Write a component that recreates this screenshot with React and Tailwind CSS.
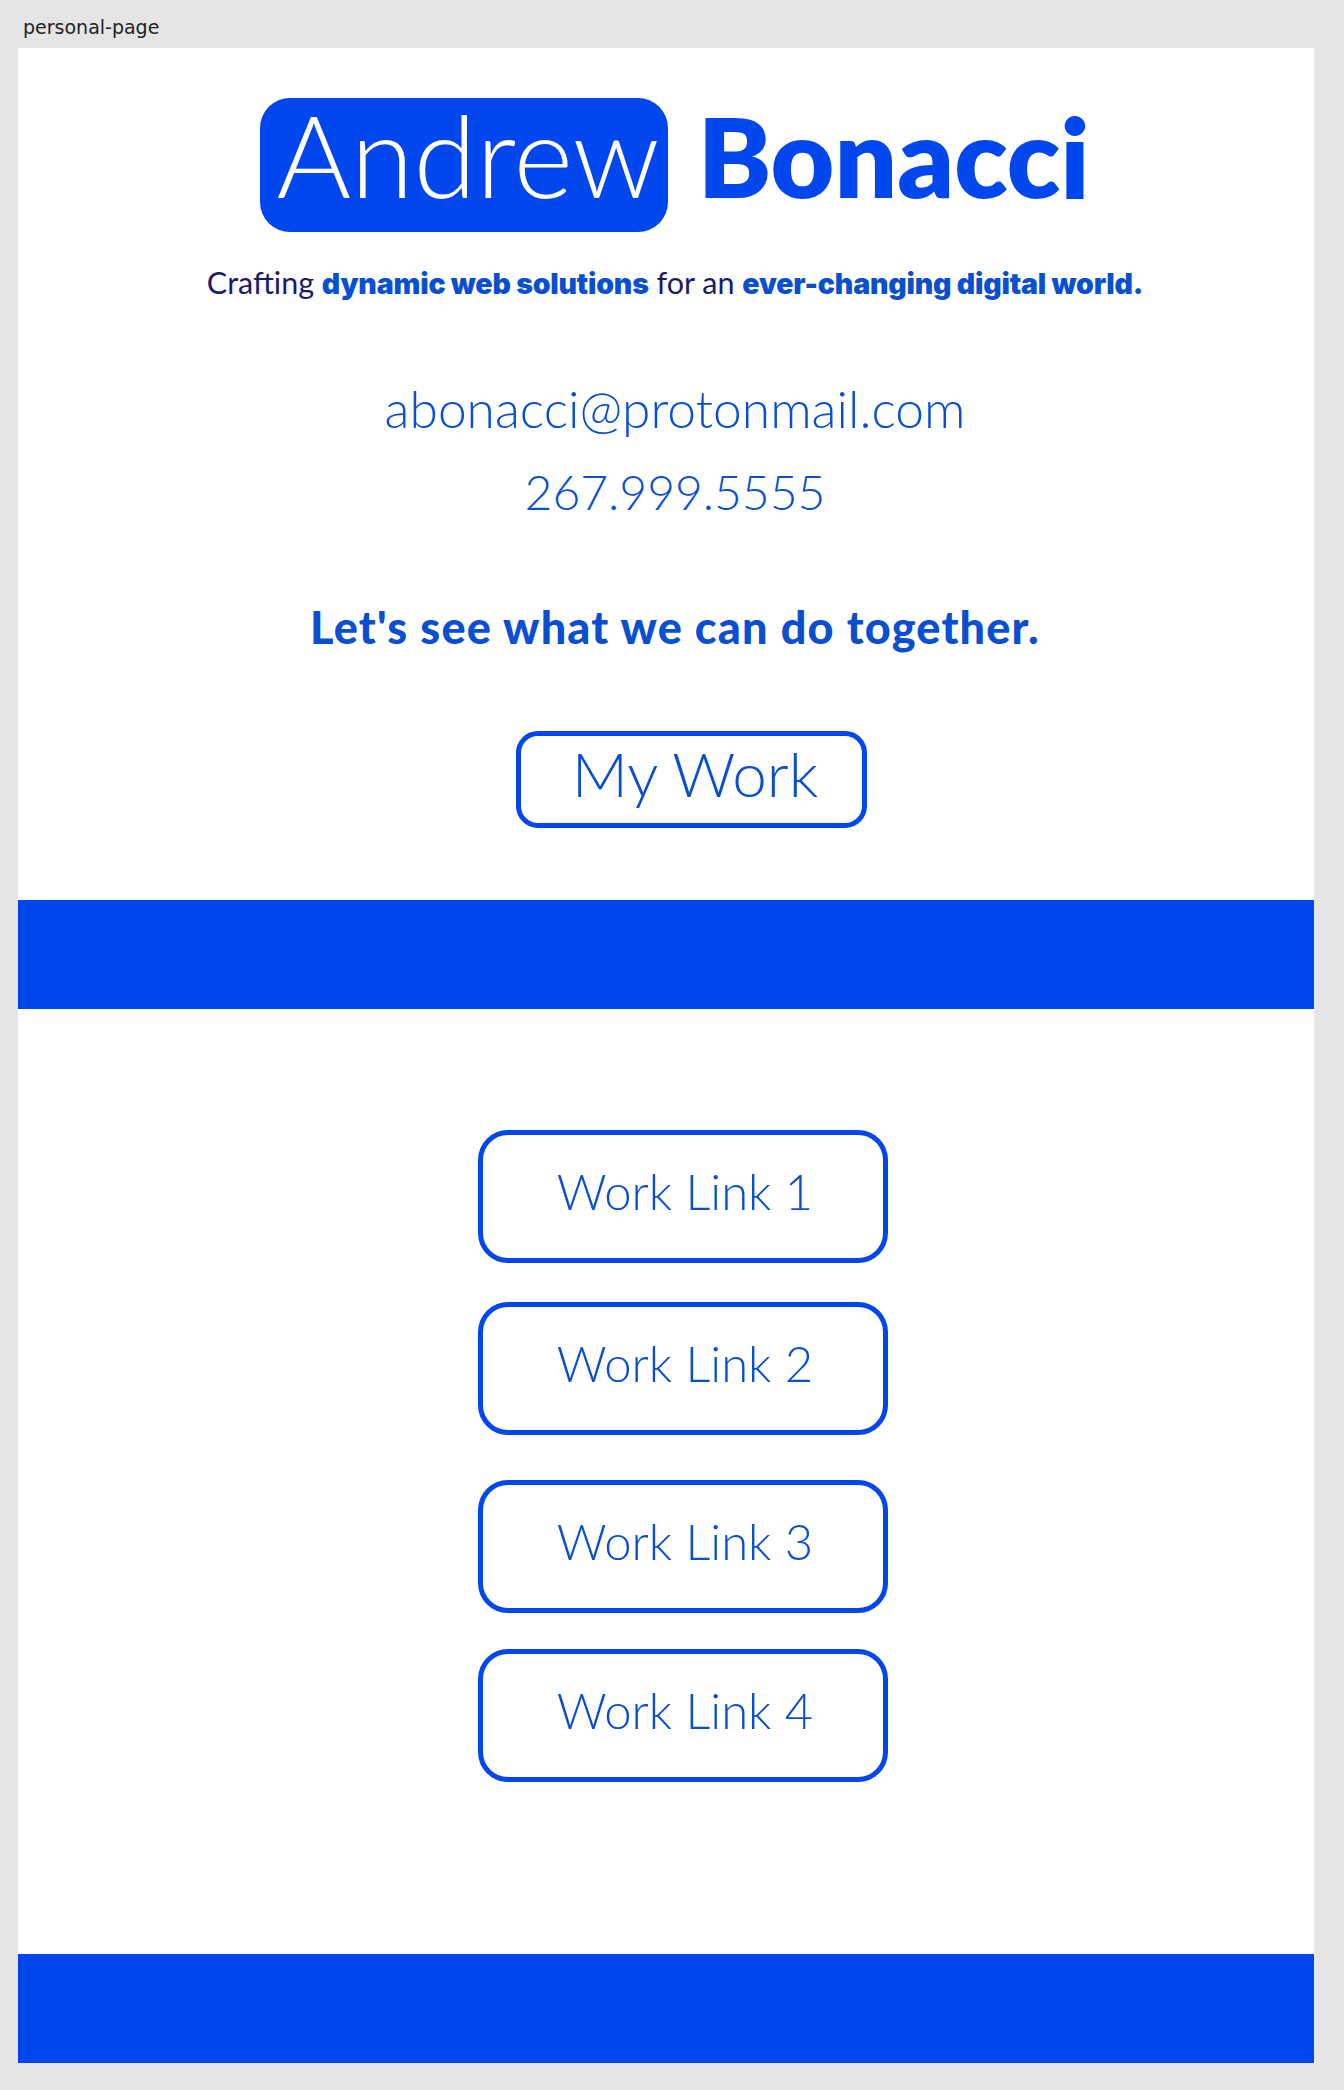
export default function App() {
  const links = [
    { label: 'Work Link 1', cls: 'mt-[121px]' },
    { label: 'Work Link 2', cls: 'mt-[39px]' },
    { label: 'Work Link 3', cls: 'mt-[45px]' },
    { label: 'Work Link 4', cls: 'mt-[36px]' },
  ];

  return (
    <div className="min-h-[2090px] bg-[#e5e5e5] font-['Lato',sans-serif]">
      <div className="h-[48px] pl-[23px] pt-[16px] font-['DejaVu_Sans',sans-serif] text-[19px] leading-[23px] text-[#222]">
        personal-page
      </div>

      <main className="mx-[18px] w-[1296px] bg-white">
        <section className="flex flex-col items-center pl-[18px] pt-[50px]">
          <h1 className="flex items-baseline">
            <span className="block h-[134px] rounded-[30px] bg-[#0246ed] pl-[16px] pr-[8px] text-[114px] font-light leading-[112px] text-white">
              Andrew
            </span>
            <span className="ml-[30px] text-[110px] font-extrabold leading-[112px] text-[#0246ed]">
              Bonacci
            </span>
          </h1>

          <p className="mt-[30px] h-[40px] text-[30.5px] leading-[40px] text-[#1c1a6b]">
            Crafting{' '}
            <strong className="font-['Inter',sans-serif] text-[28.5px] font-black leading-[1] tracking-[-0.2px] text-[#0a4fd0]">dynamic web solutions</strong>{' '}
            for an{' '}
            <strong className="font-['Inter',sans-serif] text-[28.5px] font-black leading-[1] tracking-[-0.2px] text-[#0a4fd0]">ever-changing digital world.</strong>
          </p>

          <div className="mt-[65px] text-center font-light leading-[83px] text-[#0a4fd0]">
            <div className="text-[51.5px]">abonacci@protonmail.com</div>
            <div className="text-[48px]">267.999.5555</div>
          </div>

          <p className="mt-[69px] text-[45px] font-black leading-[50px] tracking-[1.2px] text-[#0a4fd0]">
            Let's see what we can do together.
          </p>

          <a className="ml-[32px] mt-[79px] block h-[97px] w-[351px] rounded-[22px] border-[5px] border-[#0246ed] pl-[8px] text-center text-[62px] font-light leading-[75px] text-[#0a4fd0]">
            My Work
          </a>
        </section>

        <div className="mt-[72px] h-[109px] bg-[#0246ed]" />

        <section className="flex flex-col items-center pl-[18px]">
          {links.map((link) => (
            <a
              key={link.label}
              className={`${link.cls} ml-[16px] block h-[133px] w-[410px] rounded-[30px] border-[5px] border-[#0246ed] pl-[4px] pt-[27px] text-center text-[49px] font-light leading-[59px] text-[#0a4fd0]`}
            >
              {link.label}
            </a>
          ))}
        </section>

        <div className="mt-[172px] h-[109px] bg-[#0246ed]" />
      </main>
    </div>
  );
}
